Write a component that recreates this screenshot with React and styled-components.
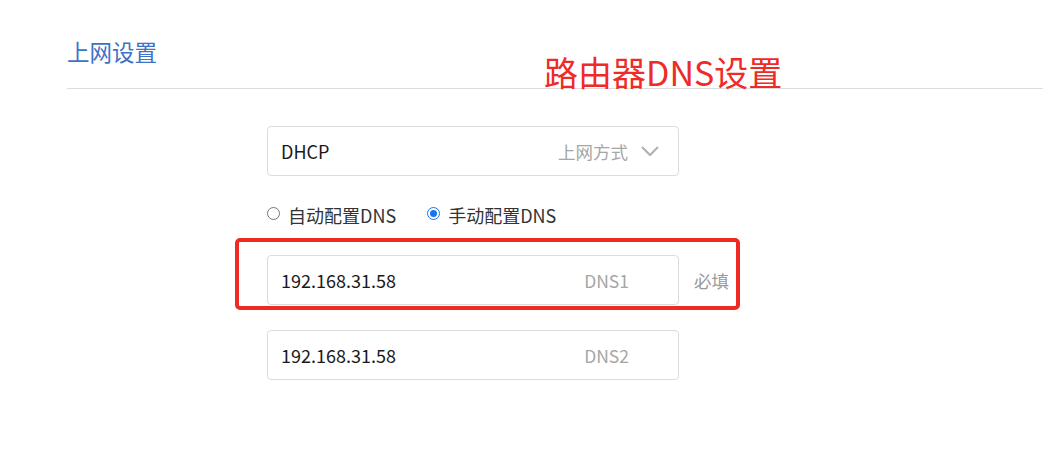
import React from "react";
import styled, { createGlobalStyle } from "styled-components";

const GlobalStyle = createGlobalStyle`
  body {
    margin: 0;
    background: #fff;
    font-family: "Noto Sans CJK SC", "Noto Sans", sans-serif;
  }
`;

const Page = styled.div`
  position: relative;
  width: 1043px;
  height: 450px;
  overflow: hidden;
`;

const Header = styled.div`
  padding: 40px 0 0 67px;
`;

const Title = styled.div`
  font-size: 22.5px;
  line-height: 22px;
  color: #3d72c6;
`;

const Divider = styled.div`
  margin-top: 26px;
  height: 1px;
  background: #dcdcdc;
`;

const Annotation = styled.div`
  position: absolute;
  left: 544px;
  top: 55px;
  font-size: 34px;
  line-height: 34px;
  color: #ee2b26;
`;

const Form = styled.div`
  margin: 37px 0 0 267px;
  width: 412px;
  display: flex;
  flex-direction: column;
`;

const Box = styled.div`
  box-sizing: border-box;
  flex-shrink: 0;
  width: 412px;
  height: 50px;
  border: 1px solid #dcdcdc;
  border-radius: 4px;
  display: flex;
  align-items: center;
  padding: ${(p) => (p.$select ? "0 18px 0 13px" : "0 49px 0 13px")};
  font-size: 18px;
  color: #1a1a1a;
`;

const Value = styled.span`
  flex: 1;
`;

const Hint = styled.span`
  font-size: 17.5px;
  color: #a6a6a6;
`;

const Chevron = styled.svg`
  margin-left: 12px;
  display: block;
`;

const RadioRow = styled.div`
  margin-top: 22px;
  height: 34px;
  display: flex;
  align-items: center;
  gap: 31px;
  font-size: 18px;
  color: #333;
`;

const RadioLabel = styled.label`
  display: flex;
  align-items: center;
  gap: 8px;
`;

const RadioDot = styled.span`
  box-sizing: border-box;
  width: 13px;
  height: 13px;
  margin-top: -3px;
  border-radius: 50%;
  border: 1px solid ${(p) => (p.$checked ? "#1a73e8" : "#767676")};
  background: #fff;
  display: flex;
  align-items: center;
  justify-content: center;
  &::after {
    content: "";
    width: 7px;
    height: 7px;
    border-radius: 50%;
    background: ${(p) => (p.$checked ? "#1a73e8" : "transparent")};
  }
`;

const FieldRow = styled.div`
  position: relative;
  display: flex;
  align-items: center;
  margin-top: ${(p) => p.$top}px;
`;

const Required = styled.span`
  margin-left: 15px;
  font-size: 17.5px;
  color: #999;
  white-space: nowrap;
`;

const Highlight = styled.div`
  position: absolute;
  left: -32px;
  top: -17px;
  width: 505px;
  height: 72px;
  box-sizing: border-box;
  border: 4px solid #ee2a24;
  border-radius: 5px;
  pointer-events: none;
`;

const Radio = ({ checked, children }) => (
  <RadioLabel>
    <RadioDot $checked={checked} />
    {children}
  </RadioLabel>
);

export default function App() {
  return (
    <Page>
      <GlobalStyle />
      <Header>
        <Title>上网设置</Title>
        <Divider />
      </Header>
      <Annotation>路由器DNS设置</Annotation>
      <Form>
        <Box $select>
          <Value>DHCP</Value>
          <Hint>上网方式</Hint>
          <Chevron width="20" height="12" viewBox="0 0 20 12">
            <polyline points="2,2 10,10 18,2" fill="none" stroke="#b0b0b0" strokeWidth="2" />
          </Chevron>
        </Box>
        <RadioRow>
          <Radio>自动配置DNS</Radio>
          <Radio checked>手动配置DNS</Radio>
        </RadioRow>
        <FieldRow $top={23}>
          <Highlight />
          <Box>
            <Value>192.168.31.58</Value>
            <Hint>DNS1</Hint>
          </Box>
          <Required>必填</Required>
        </FieldRow>
        <FieldRow $top={25}>
          <Box>
            <Value>192.168.31.58</Value>
            <Hint>DNS2</Hint>
          </Box>
        </FieldRow>
      </Form>
    </Page>
  );
}
